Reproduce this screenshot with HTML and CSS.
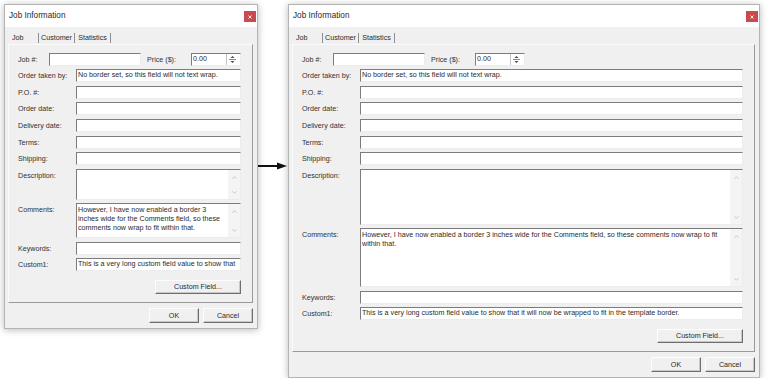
FILE: index.html
```html
<!DOCTYPE html>
<html lang="en">
<head>
<meta charset="utf-8">
<title>Job Information</title>
<link rel="stylesheet" href="styles.css">
</head>
<body>
<div class="stage">
  <section class="dialog dialog-small">
    <header class="titlebar">
      <span class="title">Job Information</span>
      <span class="close"><svg width="4" height="4" viewBox="0 0 4 4"><path d="M0.5 0.5L3.5 3.5M3.5 0.5L0.5 3.5" stroke="#fff" stroke-width="0.9"/></svg></span>
    </header>
    <div class="body">
      <div class="tabs">
        <span class="tab tab-job">Job</span><span class="tab tab-customer">Customer</span><span class="tab tab-stats">Statistics</span>
      </div>
      <div class="panel">
        <div class="row">
          <span class="lbl lbl-job">Job #:</span>
          <span class="field field-job"></span>
          <span class="lbl lbl-price">Price ($):</span>
          <span class="field spin"><span class="spin-val">0.00</span><svg class="spin-btn" width="12" height="11" viewBox="0 0 12 11"><path d="M0.5 0V11" stroke="#c4c4c4"/><path d="M3 5.5H10" stroke="#6a6a6a" stroke-width="0.8"/><path d="M4.5 4L8.5 4L6.5 2Z" fill="#4a4a4a"/><path d="M4.5 7L8.5 7L6.5 9Z" fill="#4a4a4a"/></svg></span>
        </div>
        <div class="row"><span class="lbl">Order taken by:</span><span class="field">No border set, so this field will not text wrap.</span></div>
        <div class="row"><span class="lbl">P.O. #:</span><span class="field"></span></div>
        <div class="row"><span class="lbl">Order date:</span><span class="field"></span></div>
        <div class="row"><span class="lbl">Delivery date:</span><span class="field"></span></div>
        <div class="row"><span class="lbl">Terms:</span><span class="field"></span></div>
        <div class="row"><span class="lbl">Shipping:</span><span class="field"></span></div>
        <div class="row row-desc-s">
          <span class="lbl">Description:</span>
          <div class="area"><div class="area-text"></div><div class="scroll"><svg width="5" height="3" viewBox="0 0 5 3"><path d="M0.5 2.7L2.5 0.7L4.5 2.7" fill="none" stroke="#bdbdbd" stroke-width="0.8"/></svg><svg width="5" height="3" viewBox="0 0 5 3"><path d="M0.5 0.3L2.5 2.3L4.5 0.3" fill="none" stroke="#bdbdbd" stroke-width="0.8"/></svg></div></div>
        </div>
        <div class="row row-comm-s">
          <span class="lbl">Comments:</span>
          <div class="area"><div class="area-text">However, I have now enabled a border 3<br>inches wide for the Comments field, so these<br>comments now wrap to fit within that.</div><div class="scroll"><svg width="5" height="3" viewBox="0 0 5 3"><path d="M0.5 2.7L2.5 0.7L4.5 2.7" fill="none" stroke="#bdbdbd" stroke-width="0.8"/></svg><svg width="5" height="3" viewBox="0 0 5 3"><path d="M0.5 0.3L2.5 2.3L4.5 0.3" fill="none" stroke="#bdbdbd" stroke-width="0.8"/></svg></div></div>
        </div>
        <div class="row"><span class="lbl">Keywords:</span><span class="field"></span></div>
        <div class="row"><span class="lbl">Custom1:</span><span class="field">This is a very long custom field value to show that</span></div>
        <div class="panel-actions"><span class="btn btn-custom">Custom Field...</span></div>
      </div>
      <div class="actions"><span class="btn">OK</span><span class="btn">Cancel</span></div>
    </div>
  </section>

  <svg class="arrow" width="29" height="8" viewBox="0 0 29 8"><path d="M0 4H21" stroke="#111" stroke-width="2"/><path d="M19 0.6L29 4L19 7.4Z" fill="#111"/></svg>

  <section class="dialog dialog-large">
    <header class="titlebar">
      <span class="title">Job Information</span>
      <span class="close"><svg width="4" height="4" viewBox="0 0 4 4"><path d="M0.5 0.5L3.5 3.5M3.5 0.5L0.5 3.5" stroke="#fff" stroke-width="0.9"/></svg></span>
    </header>
    <div class="body">
      <div class="tabs">
        <span class="tab tab-job">Job</span><span class="tab tab-customer">Customer</span><span class="tab tab-stats">Statistics</span>
      </div>
      <div class="panel">
        <div class="row">
          <span class="lbl lbl-job">Job #:</span>
          <span class="field field-job"></span>
          <span class="lbl lbl-price">Price ($):</span>
          <span class="field spin"><span class="spin-val">0.00</span><svg class="spin-btn" width="12" height="11" viewBox="0 0 12 11"><path d="M0.5 0V11" stroke="#c4c4c4"/><path d="M3 5.5H10" stroke="#6a6a6a" stroke-width="0.8"/><path d="M4.5 4L8.5 4L6.5 2Z" fill="#4a4a4a"/><path d="M4.5 7L8.5 7L6.5 9Z" fill="#4a4a4a"/></svg></span>
        </div>
        <div class="row"><span class="lbl">Order taken by:</span><span class="field">No border set, so this field will not text wrap.</span></div>
        <div class="row"><span class="lbl">P.O. #:</span><span class="field"></span></div>
        <div class="row"><span class="lbl">Order date:</span><span class="field"></span></div>
        <div class="row"><span class="lbl">Delivery date:</span><span class="field"></span></div>
        <div class="row"><span class="lbl">Terms:</span><span class="field"></span></div>
        <div class="row"><span class="lbl">Shipping:</span><span class="field"></span></div>
        <div class="row row-desc-l">
          <span class="lbl">Description:</span>
          <div class="area"><div class="area-text"></div><div class="scroll"><svg width="5" height="3" viewBox="0 0 5 3"><path d="M0.5 2.7L2.5 0.7L4.5 2.7" fill="none" stroke="#bdbdbd" stroke-width="0.8"/></svg><svg width="5" height="3" viewBox="0 0 5 3"><path d="M0.5 0.3L2.5 2.3L4.5 0.3" fill="none" stroke="#bdbdbd" stroke-width="0.8"/></svg></div></div>
        </div>
        <div class="row row-comm-l">
          <span class="lbl">Comments:</span>
          <div class="area"><div class="area-text">However, I have now enabled a border 3 inches wide for the Comments field, so these comments now wrap to fit<br>within that.</div><div class="scroll"><svg width="5" height="3" viewBox="0 0 5 3"><path d="M0.5 2.7L2.5 0.7L4.5 2.7" fill="none" stroke="#bdbdbd" stroke-width="0.8"/></svg><svg width="5" height="3" viewBox="0 0 5 3"><path d="M0.5 0.3L2.5 2.3L4.5 0.3" fill="none" stroke="#bdbdbd" stroke-width="0.8"/></svg></div></div>
        </div>
        <div class="row"><span class="lbl">Keywords:</span><span class="field"></span></div>
        <div class="row"><span class="lbl">Custom1:</span><span class="field">This is a very long custom field value to show that it will now be wrapped to fit in the template border.</span></div>
        <div class="panel-actions"><span class="btn btn-custom">Custom Field...</span></div>
      </div>
      <div class="actions"><span class="btn">OK</span><span class="btn">Cancel</span></div>
    </div>
  </section>
</div>
</body>
</html>
```

FILE: styles.css
```css
* { box-sizing: border-box; }
html, body { margin: 0; padding: 0; background: #fff; }
body {
  font-family: "Liberation Sans", Arial, sans-serif;
  font-size: 7.15px;
  color: #2a2a2a;
}
.stage {
  display: flex;
  align-items: flex-start;
  padding: 4px 0 0 4px;
}
.dialog {
  display: flex;
  flex-direction: column;
  background: #f0f0f0;
  border: 1px solid #b4b4b4;
  box-shadow: 0 1px 7px rgba(0, 0, 0, 0.28);
}
.dialog-small { width: 254px; }
.dialog-large { width: 472px; margin-left: 1px; }
.arrow { flex: none; margin-top: 158px; display: block; }

.titlebar {
  height: 22px;
  background: #fff;
  display: flex;
  justify-content: space-between;
  align-items: flex-start;
  padding: 0 1px 0 4px;
}
.title { font-size: 8.2px; line-height: 22px; color: #2a2a2a; }
.close {
  width: 12px;
  height: 11px;
  margin-top: 6px;
  background: #c94b4f;
  display: flex;
  align-items: center;
  justify-content: center;
}
.close svg { display: block; }

.body { padding: 0 4px 0 3px; }
.tabs {
  height: 17px;
  display: flex;
  align-items: flex-end;
  padding-bottom: 1px;
}
.tab {
  height: 10px;
  line-height: 10px;
  border-right: 1px solid #8e8e8e;
  text-align: center;
  white-space: nowrap;
}
.tab-job { width: 31px; text-align: left; padding-left: 4px; }
.tab-customer { width: 36px; }
.tab-stats { width: 36px; }

.panel {
  border: 1px solid;
  border-color: #fbfbfb #9a9a9a #9a9a9a #fbfbfb;
  padding: 7.7px 11px 8.5px 9px;
  display: flex;
  flex-direction: column;
  gap: 3.6px;
}
.row { display: flex; align-items: flex-start; height: 13px; flex: none; }
.row-desc-s { height: 31px; }
.row-comm-s { height: 34.5px; }
.row-desc-l { height: 56px; }
.row-comm-l { height: 58.5px; }

.lbl {
  width: 58px;
  flex: none;
  line-height: 13px;
  padding-top: 1px;
  white-space: nowrap;
  color: #303030;
}
.lbl-job { width: 31px; }
.lbl-price { width: 44px; margin-left: 6px; }

.field {
  flex: 1;
  min-width: 0;
  height: 13px;
  background: #fff;
  border: 1px solid;
  border-color: #7c7c7c #ececec #ececec #7c7c7c;
  padding: 0 1px;
  line-height: 11px;
  white-space: nowrap;
  overflow: hidden;
}
.field-job { flex: none; width: 92px; }
.spin { flex: none; width: 50px; display: flex; justify-content: space-between; padding-right: 2px; }
.spin-btn { display: block; flex: none; }

.area {
  flex: 1;
  min-width: 0;
  height: 100%;
  display: flex;
  background: #fff;
  border: 1px solid;
  border-color: #7c7c7c #ececec #ececec #7c7c7c;
}
.area-text {
  flex: 1;
  min-width: 0;
  padding: 2px 1px;
  line-height: 9px;
  white-space: nowrap;
  overflow: hidden;
}
.scroll {
  width: 12px;
  flex: none;
  background: #f4f4f4;
  display: flex;
  flex-direction: column;
  justify-content: space-between;
  align-items: center;
  padding: 6px 0 5px;
}
.scroll svg { display: block; }

.btn {
  display: flex;
  align-items: center;
  justify-content: center;
  height: 15px;
  width: 50px;
  background: #f0f0f0;
  border: 1px solid;
  border-color: #fdfdfd #6e6e6e #6e6e6e #fdfdfd;
  box-shadow: inset -1px -1px 0 #c8c8c8;
  white-space: nowrap;
}
.panel-actions {
  display: flex;
  justify-content: flex-end;
  margin-top: 5.2px;
}
.btn-custom { width: 86px; height: 14px; }
.actions {
  display: flex;
  justify-content: flex-end;
  gap: 4px;
  padding: 5px 0;
}
```
